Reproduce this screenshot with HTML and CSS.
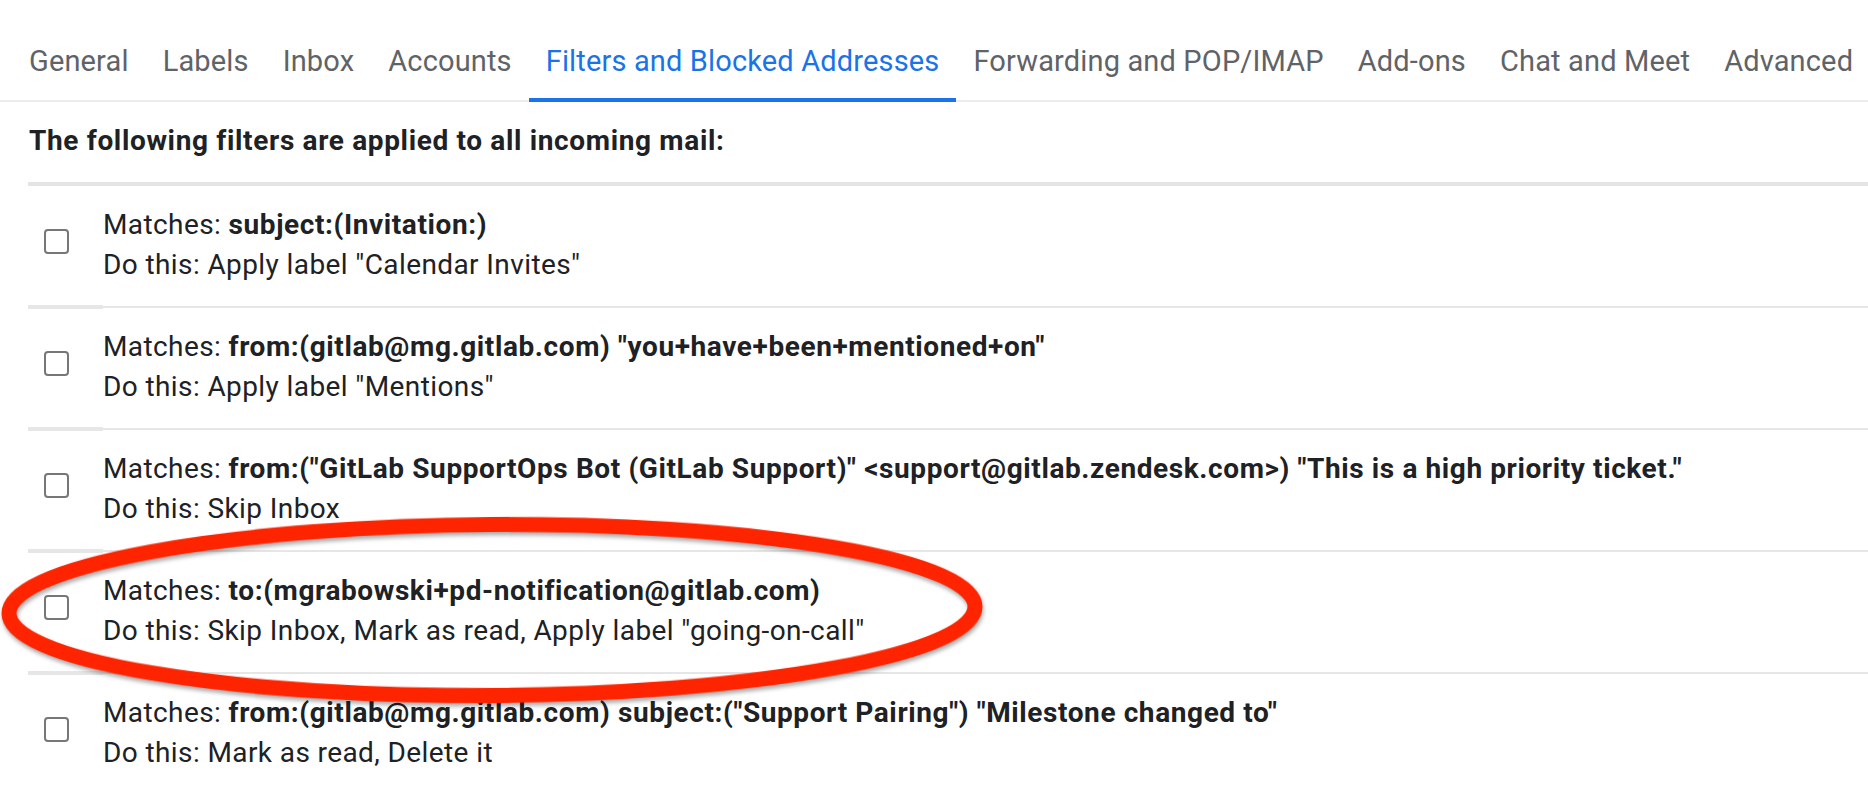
FILE: index.html
```html
<!DOCTYPE html>
<html lang="en">
<head>
<meta charset="utf-8">
<title>Settings - Filters and Blocked Addresses</title>
<link rel="stylesheet" href="styles.css">
</head>
<body>
<div class="page">
  <nav class="tabs">
    <div class="tab">General</div>
    <div class="tab">Labels</div>
    <div class="tab">Inbox</div>
    <div class="tab">Accounts</div>
    <div class="tab active">Filters and Blocked Addresses</div>
    <div class="tab">Forwarding and POP/IMAP</div>
    <div class="tab">Add-ons</div>
    <div class="tab">Chat and Meet</div>
    <div class="tab">Advanced</div>
  </nav>
  <section class="content">
    <h2 class="heading">The following filters are applied to all incoming mail:</h2>
    <div class="filters">
      <div class="filter">
        <div class="cb-cell"><span class="checkbox"></span></div>
        <div class="desc">
          <div class="line">Matches: <b>subject:(Invitation:)</b></div>
          <div class="line">Do this: Apply label "Calendar Invites"</div>
        </div>
      </div>
      <div class="sep"><span class="sep-a"></span><span class="sep-b"></span></div>
      <div class="filter">
        <div class="cb-cell"><span class="checkbox"></span></div>
        <div class="desc">
          <div class="line">Matches: <b>from:(gitlab@mg.gitlab.com) "you+have+been+mentioned+on"</b></div>
          <div class="line">Do this: Apply label "Mentions"</div>
        </div>
      </div>
      <div class="sep"><span class="sep-a"></span><span class="sep-b"></span></div>
      <div class="filter">
        <div class="cb-cell"><span class="checkbox"></span></div>
        <div class="desc">
          <div class="line">Matches: <b>from:("GitLab SupportOps Bot (GitLab Support)" &lt;support@gitlab.zendesk.com&gt;) "This is a high priority ticket."</b></div>
          <div class="line">Do this: Skip Inbox</div>
        </div>
      </div>
      <div class="sep"><span class="sep-a"></span><span class="sep-b"></span></div>
      <div class="filter">
        <div class="cb-cell"><span class="checkbox"></span></div>
        <div class="desc">
          <div class="line">Matches: <b>to:(mgrabowski+pd-notification@gitlab.com)</b></div>
          <div class="line">Do this: Skip Inbox, Mark as read, Apply label "going-on-call"</div>
        </div>
      </div>
      <div class="sep"><span class="sep-a"></span><span class="sep-b"></span></div>
      <div class="filter">
        <div class="cb-cell"><span class="checkbox"></span></div>
        <div class="desc">
          <div class="line">Matches: <b>from:(gitlab@mg.gitlab.com) subject:("Support Pairing") "Milestone changed to"</b></div>
          <div class="line">Do this: Mark as read, Delete it</div>
        </div>
      </div>
    </div>
  </section>
  <svg class="annotation" width="1868" height="788" viewBox="0 0 1868 788" aria-hidden="true">
    <ellipse cx="492" cy="610" rx="483" ry="85.5" transform="rotate(-0.4 492 610)"></ellipse>
  </svg>
</div>
</body>
</html>
```

FILE: styles.css
```css
html, body {
  margin: 0;
  padding: 0;
  background: #ffffff;
}

.page {
  position: relative;
  width: 1868px;
  height: 788px;
  overflow: hidden;
  font-family: Roboto, "Liberation Sans", Arial, sans-serif;
  color: #202124;
}

.tabs {
  display: flex;
  height: 100px;
  padding-left: 12px;
  border-bottom: 2px solid #ececec;
}

.tab {
  padding: 41px 17px 0;
  font-size: 29px;
  line-height: 40px;
  letter-spacing: 0.15px;
  color: #5f6368;
  white-space: nowrap;
}

.tab.active {
  color: #1a73e8;
  margin-bottom: -2px;
  border-bottom: 4px solid #1a73e8;
}

.content {
  padding-left: 28px;
}

.heading {
  margin: 0;
  padding: 19px 0 21px 1px;
  font-size: 28px;
  line-height: 40px;
  letter-spacing: 0.65px;
  font-weight: 700;
  color: #202124;
}

.filters {
  border-top: 4px solid #e4e4e4;
}

.filter {
  display: flex;
  align-items: center;
  height: 120px;
}

.cb-cell {
  width: 75px;
  flex: none;
  padding-left: 16px;
  box-sizing: border-box;
}

.checkbox {
  display: block;
  width: 21px;
  height: 21px;
  border: 2px solid #777777;
  border-radius: 4px;
  margin-top: -9px;
}

.desc {
  padding-bottom: 2px;
}

.line {
  font-size: 28px;
  line-height: 40px;
  letter-spacing: 0.4px;
  white-space: nowrap;
}

.line b {
  font-weight: 700;
  letter-spacing: 0.6px;
}

.sep {
  display: flex;
  align-items: center;
  height: 2px;
}

.sep-a {
  width: 75px;
  height: 4px;
  flex: none;
  background: #e6e6e6;
}

.sep-b {
  flex: 1;
  height: 2px;
  background: #e6e6e6;
}

.annotation {
  position: absolute;
  left: 0;
  top: 0;
  pointer-events: none;
  overflow: visible;
}

.annotation ellipse {
  fill: none;
  stroke: #ff2400;
  stroke-width: 15;
  filter: drop-shadow(1px 3px 2px rgba(0, 0, 0, 0.35));
}
```
